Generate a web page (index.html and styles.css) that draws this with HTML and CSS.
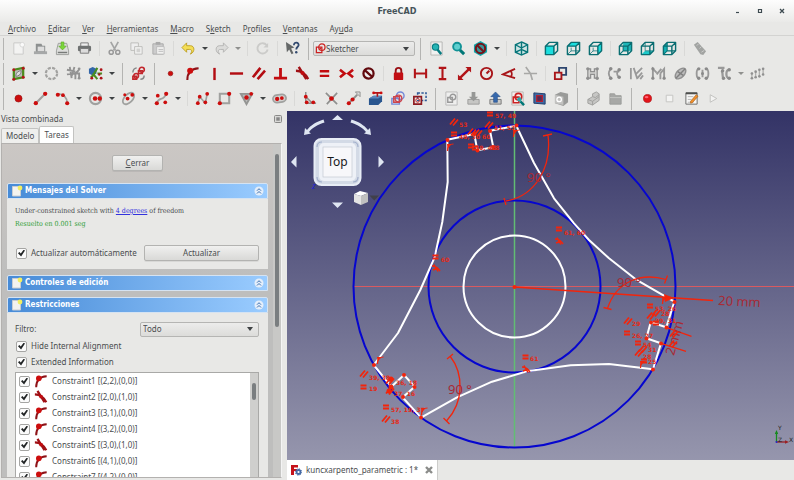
FILE: index.html
```html
<!DOCTYPE html>
<html lang="es">
<head>
<meta charset="utf-8">
<title>FreeCAD</title>
<link rel="stylesheet" href="styles.css">
</head>
<body>
<svg class="defs" aria-hidden="true">
<defs>
<symbol id="new" viewBox="0 0 16 16"><path d="M3 2h8l2 3v9H3z" fill="#f3f3f2" stroke="#c9c9c7"/><circle cx="12" cy="4" r="2.500" fill="#fafafa" stroke="#d8d8d6"/></symbol>
<symbol id="open" viewBox="0 0 16 16"><path d="M3 3h6l1 2h3v7H3z" fill="#8d9090"/><path d="M5 6h7v5H5z" fill="#ddd"/><path d="M1 11h14v3H1z" fill="#a6a8a8"/></symbol>
<symbol id="save" viewBox="0 0 16 16"><path d="M3.500 2.500h9l2 8v4h-13v-4z" fill="#dcdddb" stroke="#9b9d9a"/><path d="M3 11.500h10v1.500H3z" fill="#777a78"/><path d="M6.500 1h3v4.500H12L8 9.500 4 5.500h2.500z" fill="#7bd63a" stroke="#55a51f" stroke-width=".6"/></symbol>
<symbol id="print" viewBox="0 0 16 16"><path d="M4 2h8v4H4z" fill="#eee" stroke="#777"/><rect x="1" y="5" width="14" height="6" rx="1.500" fill="#6f7272"/><path d="M3.500 8h9v5h-9z" fill="#dcdcdc" stroke="#777"/></symbol>
<symbol id="cut" viewBox="0 0 16 16"><path d="M4 1l5 9M12 1L7 10" stroke="#a3a4a4" stroke-width="1.800" fill="none"/><circle cx="4.500" cy="12" r="2.200" fill="none" stroke="#999" stroke-width="1.600"/><circle cx="11.500" cy="12" r="2.200" fill="none" stroke="#999" stroke-width="1.600"/></symbol>
<symbol id="copy" viewBox="0 0 16 16"><path d="M2 2h8v8H2z" fill="#eee" stroke="#bcbcba"/><path d="M6 6h8v8H6z" fill="#f3f3f2" stroke="#bcbcba"/><path d="M8 8h4v4H8z" fill="#d2d2d0"/></symbol>
<symbol id="paste" viewBox="0 0 16 16"><path d="M2 3h11v11H2z" fill="#ccc" stroke="#aaa"/><path d="M5 1h5v3H5z" fill="#aaa"/><path d="M6 6h8v8H6z" fill="#f1f1f0" stroke="#bbb"/><path d="M8 9h5M8 11h5" stroke="#bbb"/></symbol>
<symbol id="undo" viewBox="0 0 16 16"><path d="M6 2v3h4c5 0 5 7 0 9 2-3 2-5-1-5H6v3L1 7z" fill="#f4de55" stroke="#b99a1d" stroke-width=".9"/></symbol>
<symbol id="redo" viewBox="0 0 16 16"><path d="M10 2v3H6c-5 0-5 7 0 9-2-3-2-5 1-5h3v3l5-5z" fill="#dcdcda" stroke="#b0b0ae" stroke-width=".9"/></symbol>
<symbol id="refresh" viewBox="0 0 16 16"><path d="M12.500 4.500A5.500 5.500 0 1 0 13.500 9" fill="none" stroke="#cbcbc9" stroke-width="2"/><path d="M14 2v5H9z" fill="#cbcbc9"/></symbol>
<symbol id="whats" viewBox="0 0 16 16"><path d="M1 1l9 6-3.500 1 2.500 5-2 1-2.500-5L2 12z" fill="#646767"/><path d="M9.500 4.500c0-4 5.500-3.500 5 0-.4 2-2.500 2-2.500 4.500" fill="none" stroke="#31496f" stroke-width="1.900"/><circle cx="12" cy="12" r="1.300" fill="#31496f"/></symbol>
<symbol id="sk" viewBox="0 0 16 16"><g fill="none" stroke="#c22" stroke-width="1.800"><circle cx="10" cy="6" r="4.600"/><path d="M2 6h8v8H2z"/><path d="M6 10l3-3"/></g></symbol>
<symbol id="zfit" viewBox="0 0 16 16"><path d="M2 1h12v14H2z" fill="#f1f1f0" stroke="#b5b5b2"/><path d="M9 9l4 5" stroke="#067b80" stroke-width="2.600"/><circle cx="7" cy="6.500" r="3.400" fill="#25b4b4" stroke="#0a7f84" stroke-width="1.200"/></symbol>
<symbol id="zsel" viewBox="0 0 16 16"><path d="M9 9l5 5" stroke="#077" stroke-width="3.200"/><circle cx="6.500" cy="6" r="4.200" fill="#5fcfcf" stroke="#119296" stroke-width="2"/></symbol>
<symbol id="dstyle" viewBox="0 0 16 16"><path d="M8 0l7 4v8l-7 4-7-4V4z" fill="#12a5a8"/><circle cx="8" cy="8" r="5" fill="#3a9699" stroke="#75141a" stroke-width="2.200"/><path d="M4.500 4.500l7 7" stroke="#75141a" stroke-width="2.200"/></symbol>
<symbol id="iso" viewBox="0 0 16 16"><path d="M8 1l6.500 3v8L8 15l-6.500-3V4z" fill="#cfe5e4"/><g fill="none" stroke="#08767a" stroke-width="1.500"><path d="M8 1l6.500 3v8L8 15l-6.500-3V4z"/><path d="M1.500 4L8 7.500 14.500 4M8 7.500V15M1.500 12L8 9l6.500 3M8 1v8"/></g></symbol>
<symbol id="cw" viewBox="0 0 16 16"><g fill="none" stroke="#0b6e72" stroke-width="1.500" stroke-linejoin="round"><path d="M1.500 5.500h9v9h-9zM1.500 5.500l4-4h9v9l-4 4M10.500 5.500l4-4"/></g></symbol>
<symbol id="front" viewBox="0 0 16 16"><path d="M2 5h9v9H2z" fill="#1bdede"/><use href="#cw"/></symbol>
<symbol id="topv" viewBox="0 0 16 16"><path d="M1.500 5.500l4-4h9l-4 4z" fill="#1bdede"/><path d="M2 14l3.500-3.500H14M5.500 11V7" stroke="#3a8b8e" fill="none"/><use href="#cw"/></symbol>
<symbol id="right" viewBox="0 0 16 16"><path d="M10.500 5.500l4-4v9l-4 4z" fill="#1bdede"/><path d="M2 14l3.500-3.500H11M5.500 11V7" stroke="#3a8b8e" fill="none"/><use href="#cw"/></symbol>
<symbol id="rear" viewBox="0 0 16 16"><path d="M5.500 1.500h9v9h-9z" fill="#1cb7b9"/><path d="M5.500 5v5.500H11M2 14l3.500-3.500" stroke="#08767a" stroke-width="1.200" fill="none"/><use href="#cw"/></symbol>
<symbol id="bottom" viewBox="0 0 16 16"><path d="M1.500 14.500l4-4h9l-4 4z" fill="#1bcaca"/><path d="M5.500 2v8.500H14" stroke="#3a8b8e" fill="none"/><use href="#cw"/></symbol>
<symbol id="left" viewBox="0 0 16 16"><path d="M1.500 5.500l4-4v9l-4 4z" fill="#12b2b4"/><path d="M5.500 2v8.500H14M2 14l3.500-3.500" stroke="#08767a" stroke-width="1.200" fill="none"/><use href="#cw"/></symbol>
<symbol id="measure" viewBox="0 0 16 16"><path d="M2 4l4-3 9 10-3 4-3-1z" fill="#a2a4a2"/><path d="M7 3L5 5M10 6L8 8M13 10l-3 2" stroke="#d0d0ce" stroke-width=".9"/></symbol>

<symbol id="map" viewBox="0 0 16 16"><path d="M3 4l10-2v10L3 14z" fill="#bcbcb8" stroke="#4d8c1d" stroke-width="2.400"/><path d="M5 11c0-4 3-6 6-6 0 4-3 6-6 6z" fill="#ddd" stroke="#777"/><g fill="#b3151b"><circle cx="3" cy="4" r="1.600"/><circle cx="13" cy="2.500" r="1.600"/><circle cx="13" cy="12" r="1.600"/><circle cx="3" cy="14" r="1.600"/></g></symbol>
<symbol id="dots" viewBox="0 0 16 16"><circle cx="8" cy="8" r="6" fill="none" stroke="#a2a2a0" stroke-width="2.400" stroke-dasharray="3.300 1.400"/></symbol>
<symbol id="hash" viewBox="0 0 16 16"><g stroke="#939393" stroke-width="2" fill="none"><path d="M1 4l9 2M1 9l9-1M4 1l2 12M9 1L6 11M9 9l5-5M10 14V8h4v5"/></g><g fill="#939393"><circle cx="14" cy="3" r="1.500"/><circle cx="14" cy="13" r="1.500"/></g></symbol>
<symbol id="hashc" viewBox="0 0 16 16"><path d="M1 3l4-2 4 2v5l-4 2-4-2z" fill="#3266a8"/><path d="M6 9l4-7M5 8l5 6M10 8h5M3 12l4-3" stroke="#4b8d20" stroke-width="2.200"/><g fill="#ad1318"><circle cx="14" cy="4" r="1.500"/><circle cx="14" cy="13" r="1.500"/><circle cx="4" cy="13" r="1.500"/><circle cx="12" cy="9" r="1.300"/></g></symbol>
<symbol id="link" viewBox="0 0 16 16"><g fill="none" stroke="#c2262c" stroke-width="1.700"><circle cx="11.500" cy="4" r="2.700"/><path d="M8 5h4v3H8zM2 11h4v3H2z"/><circle cx="5.500" cy="10.500" r="2.500"/></g><path d="M2 7c0-3 2-5 4-5M10 14c3 0 4-2 4-4" stroke="#888" fill="none" stroke-width="1.600"/></symbol>
<symbol id="pt" viewBox="0 0 16 16"><circle cx="8" cy="8" r="2.500" fill="#cc0d0d" stroke="#8d1010" stroke-width=".6"/></symbol>
<symbol id="coin" viewBox="0 0 16 16"><path d="M2.500 15c0-8 4-12 12-12.500" stroke="#8e1217" stroke-width="2.200" fill="none"/><circle cx="5.500" cy="5" r="3.200" fill="#cc0d0d"/></symbol>
<symbol id="vert" viewBox="0 0 16 16"><path d="M8 2v13" stroke="#b30c12" stroke-width="2.600"/></symbol>
<symbol id="horz" viewBox="0 0 16 16"><path d="M1 8h14" stroke="#b30c12" stroke-width="2.600"/></symbol>
<symbol id="par" viewBox="0 0 16 16"><path d="M2 12L10 2M7 14L15 5" stroke="#b30c12" stroke-width="2.800"/></symbol>
<symbol id="perp" viewBox="0 0 16 16"><path d="M8 2v11M1 13h14" stroke="#c20c10" stroke-width="3"/></symbol>
<symbol id="tan" viewBox="0 0 16 16"><path d="M1 5c6 0 10 3 13 9M4 1l8 13" stroke="#a01015" stroke-width="2.600" fill="none"/><circle cx="8" cy="7.500" r="2.200" fill="#c20c10"/></symbol>
<symbol id="eq" viewBox="0 0 16 16"><path d="M3 5.500h10M3 10.500h10" stroke="#c20c10" stroke-width="2.600"/></symbol>
<symbol id="sym" viewBox="0 0 16 16"><path d="M1 4l5 4-5 4M15 4l-5 4 5 4" stroke="#c20c10" stroke-width="2.800" fill="none"/></symbol>
<symbol id="block" viewBox="0 0 16 16"><circle cx="8" cy="8" r="5.400" fill="#eee" stroke="#61090d" stroke-width="2.400"/><path d="M4 4.500l8 7" stroke="#61090d" stroke-width="2.400"/></symbol>
<symbol id="lock" viewBox="0 0 16 16"><path d="M5 8V5a3 3 0 0 1 6 0v3" fill="none" stroke="#9a1015" stroke-width="2"/><rect x="3" y="7" width="10" height="8" rx="1" fill="#c20f14"/></symbol>
<symbol id="dh" viewBox="0 0 16 16"><path d="M2 3v10M14 3v10M2 8h12" stroke="#b11418" stroke-width="2.200"/></symbol>
<symbol id="dv" viewBox="0 0 16 16"><path d="M4 2h8M4 14h8M8 2v12" stroke="#b11418" stroke-width="2.200"/></symbol>
<symbol id="dd" viewBox="0 0 16 16"><path d="M3 13L13 3" stroke="#b11418" stroke-width="2.600"/><path d="M15 1v6L9 1zM1 15V9l6 6z" fill="#b11418"/></symbol>
<symbol id="rad" viewBox="0 0 16 16"><circle cx="8" cy="8" r="6" fill="none" stroke="#a81519" stroke-width="2"/><path d="M8 8l3-3" stroke="#a81519" stroke-width="2.200"/></symbol>
<symbol id="ang" viewBox="0 0 16 16"><path d="M15 3L2 9l13 4M10 5c2 2 2 5 0 7" stroke="#a81519" stroke-width="2" fill="none"/></symbol>
<symbol id="snell" viewBox="0 0 16 16"><path d="M1 8h14M3 1l5 7 2 7" stroke="#a8a8a6" stroke-width="1.800" fill="none"/></symbol>
<symbol id="tog" viewBox="0 0 16 16"><path d="M6.500 2H14v7.500H6.500z" fill="none" stroke="#2d466f" stroke-width="2"/><path d="M2 7h7v7H2z" fill="#e5e5e3" stroke="#a81519" stroke-width="2"/></symbol>
<symbol id="g1" viewBox="0 0 16 16"><path d="M3 3v10h3V9h4v4h3V3h-3v3H6V3z" fill="#d2d2d0" stroke="#8f8f8f" stroke-width="1.300"/><g fill="#8f8f8f"><circle cx="3" cy="3" r="1.800"/><circle cx="13" cy="3" r="1.800"/><circle cx="3" cy="13" r="1.800"/><circle cx="13" cy="13" r="1.800"/></g></symbol>
<symbol id="g2" viewBox="0 0 16 16"><path d="M4 3C1.500 6 1.500 10 4 13M7 6h6M13 4C10 6 10 10 13 12" stroke="#999" stroke-width="1.900" fill="none"/><g fill="#8a8a8a"><circle cx="4" cy="3" r="1.900"/><circle cx="4" cy="13" r="1.900"/><circle cx="13" cy="4" r="1.900"/><circle cx="13" cy="12" r="1.900"/></g></symbol>
<symbol id="g3" viewBox="0 0 16 16"><path d="M2 2v12M5 2l4 12M7 9l7-7M9 13l5-6M12 14l3-4" stroke="#999" stroke-width="1.900" fill="none"/></symbol>
<symbol id="g4" viewBox="0 0 16 16"><path d="M2 14V3l4 4M6 9l5-6M10 8l4-5v11M10 14V8" stroke="#999" stroke-width="2" fill="none"/><g fill="#8a8a8a"><circle cx="2" cy="13" r="1.700"/><circle cx="14" cy="13" r="1.700"/><circle cx="2" cy="3" r="1.700"/></g></symbol>
<symbol id="g5" viewBox="0 0 16 16"><ellipse cx="8" cy="8" rx="7" ry="4" transform="rotate(-45 8 8)" fill="#bbb" stroke="#8f8f8f" stroke-width="1.500"/><path d="M3 13L13 3M5 6l6 4" stroke="#808080" stroke-width="1.500"/></symbol>
<symbol id="g6" viewBox="0 0 16 16"><path d="M4 3C1 3 1 13 4 13M12 3c3 0 3 10 0 10M8 4v8" stroke="#999" stroke-width="2" fill="none"/><g fill="#8a8a8a"><circle cx="4" cy="3" r="1.800"/><circle cx="4" cy="13" r="1.800"/><circle cx="12" cy="3" r="1.800"/><circle cx="12" cy="13" r="1.800"/><circle cx="8" cy="8" r="1.600"/></g></symbol>
<symbol id="g7" viewBox="0 0 16 16"><path d="M1 2h7M5 5c2 4 0 7 2 9M13 4c-4 0-4 9 0 9" stroke="#999" stroke-width="2.400" fill="none"/><g fill="#8a8a8a"><circle cx="6" cy="5" r="1.800"/><circle cx="7" cy="13" r="1.800"/><circle cx="13" cy="4" r="1.900"/><circle cx="13" cy="13" r="1.900"/></g></symbol>
<symbol id="g8" viewBox="0 0 16 16"><path d="M2 7v6M6 6v6M10 4v7M14 3v6" stroke="#b0b0ae" stroke-width="1.400"/><g fill="#909090"><circle cx="2" cy="8" r="1.400"/><circle cx="6" cy="6" r="1.400"/><circle cx="10" cy="4" r="1.400"/><circle cx="14" cy="3" r="1.400"/><circle cx="2" cy="13" r="1.400"/><circle cx="6" cy="12" r="1.400"/><circle cx="10" cy="11" r="1.400"/><circle cx="14" cy="9" r="1.400"/></g></symbol>

<symbol id="bpt" viewBox="0 0 16 16"><circle cx="8" cy="8" r="3.800" fill="#cc0d0d" stroke="#8d1010" stroke-width=".6"/></symbol>
<symbol id="line" viewBox="0 0 16 16"><path d="M3 13L13 3" stroke="#a0a19f" stroke-width="2.200"/><g fill="#cc0d0d"><circle cx="3" cy="13" r="2.300"/><circle cx="13" cy="3" r="2.300"/></g></symbol>
<symbol id="arc" viewBox="0 0 16 16"><path d="M3 3c6 0 10 4 10 10" fill="none" stroke="#a0a19f" stroke-width="1.900"/><g fill="#cc0d0d"><circle cx="3" cy="4" r="2.200"/><circle cx="8.500" cy="4.500" r="2"/><circle cx="13" cy="13" r="2.200"/></g></symbol>
<symbol id="circ" viewBox="0 0 16 16"><circle cx="8" cy="8" r="6" fill="none" stroke="#a0a19f" stroke-width="2.200"/><g fill="#cc0d0d"><circle cx="7.500" cy="8" r="2.400"/><circle cx="12.500" cy="8" r="2.400"/></g></symbol>
<symbol id="ell" viewBox="0 0 16 16"><ellipse cx="8" cy="8" rx="7.500" ry="4.300" transform="rotate(-45 8 8)" fill="none" stroke="#a0a19f" stroke-width="1.900"/><g fill="#cc0d0d"><circle cx="7" cy="8" r="2"/><circle cx="12" cy="4" r="2"/><circle cx="4" cy="4" r="1.600"/></g></symbol>
<symbol id="bsp" viewBox="0 0 16 16"><path d="M3 13C5 5 10 12 13 3" fill="none" stroke="#a0a19f" stroke-width="2"/><g fill="#cc0d0d"><circle cx="3" cy="13" r="2.200"/><circle cx="4" cy="5" r="2"/><circle cx="13" cy="3" r="2.200"/><circle cx="12" cy="12" r="2"/></g></symbol>
<symbol id="poly" viewBox="0 0 16 16"><path d="M3 13l2-7 6 7 2-10" fill="none" stroke="#a0a19f" stroke-width="1.800"/><g fill="#cc0d0d"><circle cx="3" cy="13" r="2"/><circle cx="5" cy="6" r="2"/><circle cx="11" cy="12" r="2"/><circle cx="13" cy="3" r="2"/></g></symbol>
<symbol id="rect" viewBox="0 0 16 16"><path d="M3 3h10v10H3z" fill="none" stroke="#a0a19f" stroke-width="2.200"/><g fill="#cc0d0d"><circle cx="3" cy="13" r="2.200"/><circle cx="13" cy="3" r="2.200"/></g></symbol>
<symbol id="tri" viewBox="0 0 16 16"><path d="M2 3h12L8 14z" fill="#bbb" stroke="#949593" stroke-width="2"/><g fill="#cc0d0d"><circle cx="8" cy="7" r="2.400"/><circle cx="13" cy="3" r="2"/></g></symbol>
<symbol id="slot" viewBox="0 0 16 16"><rect x="1" y="4" width="14" height="8" rx="4" fill="#d2d2d0" stroke="#a0a19f" stroke-width="1.800" transform="rotate(-8 8 8)"/><g fill="#cc0d0d"><circle cx="5.500" cy="8.500" r="2.300"/><circle cx="10.500" cy="7.500" r="2"/></g></symbol>
<symbol id="fil" viewBox="0 0 16 16"><path d="M4 1v12h11M4 6l7 7" fill="none" stroke="#8f908e" stroke-width="1.600"/><g fill="#cc0d0d"><circle cx="4" cy="6" r="2"/><circle cx="5" cy="12" r="2"/><circle cx="12" cy="12" r="2"/></g></symbol>
<symbol id="trim" viewBox="0 0 16 16"><path d="M2 2l12 12M14 2L3 14" stroke="#8f908e" stroke-width="1.800"/><circle cx="8" cy="8" r="2.500" fill="#cc0d0d"/></symbol>
<symbol id="ext" viewBox="0 0 16 16"><path d="M3 13L12 4" stroke="#8f908e" stroke-width="2"/><path d="M10 1h5v5z" fill="#ddd" stroke="#8f908e"/><g fill="#cc0d0d"><circle cx="3" cy="13" r="2.200"/><circle cx="7" cy="9" r="2.200"/></g></symbol>
<symbol id="edge" viewBox="0 0 16 16"><path d="M1 8l5-3h9v6l-4 4H1z" fill="#29568f"/><path d="M1 8l5-3h9l-4 3z" fill="#5a86bd"/><path d="M6 2h8M10 2v4" stroke="#b11418" stroke-width="1.700"/><circle cx="6" cy="2" r="1.500" fill="#cc0d0d"/><circle cx="14" cy="2" r="1.500" fill="#cc0d0d"/></symbol>
<symbol id="carb" viewBox="0 0 16 16"><g fill="none" stroke-width="1.500"><g stroke="#7388d8"><circle cx="11" cy="5" r="4"/><path d="M2 8h8v6H2z"/></g><g stroke="#cc444c"><circle cx="9" cy="8" r="3.600"/><path d="M4 6h6v6H4z"/></g></g></symbol>
<symbol id="cons" viewBox="0 0 16 16"><path d="M6 2h9v8H6z" fill="none" stroke="#2e5a98" stroke-width="1.600" stroke-dasharray="2.500 1.500"/><path d="M2 6h8v8H2z" fill="none" stroke="#8d1a20" stroke-width="1.800"/><circle cx="6" cy="10" r="2" fill="none" stroke="#c22"/></symbol>
<symbol id="sg" viewBox="0 0 16 16"><path d="M2 1h12v14H2z" fill="#efefee" stroke="#b9b9b7"/><circle cx="9.500" cy="6.500" r="3" fill="none" stroke="#999" stroke-width="1.500"/><path d="M4 7h5v5H4z" fill="none" stroke="#999" stroke-width="1.500"/></symbol>
<symbol id="imp" viewBox="0 0 16 16"><path d="M2 9h12v5H2z" fill="#c6c6c4" stroke="#9c9c9a"/><path d="M6 1h4v5h3l-5 5-5-5h3z" fill="#969795"/></symbol>
<symbol id="exp" viewBox="0 0 16 16"><path d="M2 9h12v5H2z" fill="#c9c9c7" stroke="#777"/><path d="M6 12h4V6h3L8 1 3 6h3z" fill="#3769ac" stroke="#234a80" stroke-width=".6"/></symbol>
<symbol id="vsk" viewBox="0 0 16 16"><path d="M2 1h12v14H2z" fill="#f5eeee" stroke="#b5b5b2"/><circle cx="9" cy="6" r="3.500" fill="none" stroke="#c22" stroke-width="1.700"/><path d="M3.500 6.500h6v6h-6z" fill="none" stroke="#c22" stroke-width="1.700"/><path d="M11 11l4 4" stroke="#077" stroke-width="2.600"/><circle cx="10" cy="9" r="2.300" fill="#26a9aa"/></symbol>
<symbol id="vsec" viewBox="0 0 16 16"><path d="M2 2l12 1v11L2 13z" fill="#3f69a4" stroke="#203d6b"/><path d="M5 5h6v6H5z" fill="#542a55" stroke="#b22233" stroke-width="1.400"/></symbol>
<symbol id="vbox" viewBox="0 0 16 16"><path d="M1 4l6-3 8 2v9l-5 4-9-3z" fill="#9a9b99"/><path d="M1 4l9 2v9l-9-2z" fill="#c2c2c0"/><circle cx="5.500" cy="9" r="2.400" fill="none" stroke="#fff" stroke-width="1.400"/></symbol>
<symbol id="body" viewBox="0 0 16 16"><path d="M2 9l5-3V3l4-2 3 2v7l-7 5-5-2z" fill="#c6c6c4" stroke="#9f9f9d"/><path d="M2 9l5 2 7-5M7 6l3 1 4-3M7 11v4" stroke="#9f9f9d" fill="none"/></symbol>
<symbol id="grp" viewBox="0 0 16 16"><path d="M2 3h5l1 2h6v9H2z" fill="#a7a8a6" stroke="#9c9d9b"/><path d="M2 7h12" stroke="#c5c5c3"/></symbol>
<symbol id="rec" viewBox="0 0 16 16"><circle cx="8" cy="8" r="4.300" fill="#e3141a" stroke="#a91216" stroke-width=".7"/><ellipse cx="7" cy="6.500" rx="2" ry="1.300" fill="#f67"/></symbol>
<symbol id="stop" viewBox="0 0 16 16"><path d="M4.500 4.500h7v7h-7z" fill="#f4f4f3" stroke="#c4c4c2"/></symbol>
<symbol id="edit" viewBox="0 0 16 16"><path d="M2 2h12v12H2z" fill="#f7f7f6" stroke="#6a6b69"/><path d="M2 2.500h12" stroke="#4d4e4c" stroke-width="2"/><path d="M4 6h6M4 9h4M4 12h6" stroke="#b5b5b3"/><path d="M7 11l6-7 2 1.500-6 7-2 .5z" fill="#f0902c" stroke="#a25a13" stroke-width=".6"/></symbol>
<symbol id="play" viewBox="0 0 16 16"><path d="M4.500 4l7 4-7 4z" fill="#f3f3f2" stroke="#c0c0be"/></symbol>

<symbol id="task" viewBox="0 0 12 12"><path d="M1.500 1.500h8v9.500h-8z" fill="#f3f3ef" stroke="#c9cdd2"/><circle cx="9" cy="3" r="2.400" fill="#f2ee62"/></symbol>
<symbol id="chev" viewBox="0 0 12 12"><circle cx="6" cy="6" r="4.500" fill="#e4eefa"/><path d="M4 5.700l2-2 2 2M4 8.500l2-2 2 2" fill="none" stroke="#3c6fae" stroke-width="1"/></symbol>
<symbol id="fc" viewBox="0 0 12 12"><path d="M1 1h7v2.500H4V5h3v2H4v4H1z" fill="#c5121a"/><circle cx="8.500" cy="8" r="2" fill="none" stroke="#4569a5" stroke-width="1.800"/><circle cx="8.500" cy="8" r="3.200" fill="none" stroke="#4569a5" stroke-width="1" stroke-dasharray="1.200 1.300"/></symbol>
<symbol id="float" viewBox="0 0 8 8"><rect x=".5" y=".5" width="7" height="7" rx="1" fill="#d8d8d6" stroke="#8a8a88"/><path d="M2.500 2.500l3 3M5.500 2.500l-3 3" stroke="#777" fill="none" stroke-width=".8"/><circle cx="4" cy="4" r="1.500" fill="none" stroke="#777" stroke-width=".7"/></symbol>
<g id="mEq"><path d="M-3-1.500h6M-3 1.500h6" stroke="#f2250c" stroke-width="1.800"/></g>
<g id="mPar"><path d="M-4 2.500L1-3.500M-1 3.500L4-2.500" stroke="#f2250c" stroke-width="1.800"/></g>
<g id="mTan"><path d="M-4-2C0-2 2 0 4 3M-2-3.500l4 7M-3 2l5-2" stroke="#f2250c" stroke-width="1.500" fill="none"/></g>
<g id="mCo"><path d="M-2.500 4c0-5 2-7 6-7" stroke="#f2250c" stroke-width="1.200" fill="none"/><path d="M-3-3h4.500l-4 5z" fill="#f2250c"/></g>
</defs>
</svg>

<header class="titlebar"><h1>FreeCAD</h1>
<div class="winbtns"><button aria-label="Minimizar"><svg viewBox="0 0 6 6"><path d="M1 4.500h3" stroke="#3d4a50" stroke-width="1.200"/></svg></button><button aria-label="Maximizar"><svg viewBox="0 0 6 6"><path d="M1.500 1.500h3v3h-3z" fill="none" stroke="#3d4a50" stroke-width="1.200"/></svg></button><button aria-label="Cerrar ventana"><svg viewBox="0 0 6 6"><path d="M1 1l4 4M5 1L1 5" stroke="#3d4a50" stroke-width="1.300"/></svg></button></div>
</header>
<nav class="menubar"><a href="#"><u>A</u>rchivo</a><a href="#"><u>E</u>ditar</a><a href="#"><u>V</u>er</a><a href="#"><u>H</u>erramientas</a><a href="#"><u>M</u>acro</a><a href="#">S<u>k</u>etch</a><a href="#">P<u>r</u>ofiles</a><a href="#"><u>V</u>entanas</a><a href="#">Ay<u>u</u>da</a></nav>

<div class="toolbar"><i class="handle"></i>
<button aria-label="Nuevo"><svg><use href="#new"/></svg></button><button aria-label="Abrir"><svg><use href="#open"/></svg></button><button aria-label="Guardar"><svg><use href="#save"/></svg></button><button aria-label="Imprimir"><svg><use href="#print"/></svg></button><i class="sep"></i>
<button aria-label="Cortar"><svg><use href="#cut"/></svg></button><button aria-label="Copiar"><svg><use href="#copy"/></svg></button><button aria-label="Pegar"><svg><use href="#paste"/></svg></button><i class="sep"></i>
<button aria-label="Deshacer"><svg><use href="#undo"/></svg></button><button class="drop" aria-label="Lista deshacer"></button><button aria-label="Rehacer"><svg><use href="#redo"/></svg></button><button class="drop dim" aria-label="Lista rehacer"></button><i class="sep"></i>
<button aria-label="Actualizar vista"><svg><use href="#refresh"/></svg></button><i class="sep"></i><button aria-label="Ayuda contextual"><svg><use href="#whats"/></svg></button><i class="handle"></i>
<div class="combo workbench"><svg class="wbicon"><use href="#sk"/></svg><select aria-label="Entorno"><option>Sketcher</option></select></div><i class="handle"></i>
<button aria-label="Ajustar todo"><svg><use href="#zfit"/></svg></button><button aria-label="Ajustar selección"><svg><use href="#zsel"/></svg></button><button aria-label="Estilo de dibujo"><svg><use href="#dstyle"/></svg></button><button class="drop" aria-label="Estilos"></button><i class="sep"></i>
<button aria-label="Isométrica"><svg><use href="#iso"/></svg></button><i class="sep"></i>
<button aria-label="Frontal"><svg><use href="#front"/></svg></button><button aria-label="Superior"><svg><use href="#topv"/></svg></button><button aria-label="Derecha"><svg><use href="#right"/></svg></button><i class="sep"></i>
<button aria-label="Trasera"><svg><use href="#rear"/></svg></button><button aria-label="Inferior"><svg><use href="#bottom"/></svg></button><button aria-label="Izquierda"><svg><use href="#left"/></svg></button><i class="sep"></i>
<button aria-label="Medir"><svg><use href="#measure"/></svg></button></div>

<div class="toolbar"><i class="handle"></i>
<button aria-label="Espacio virtual"><svg><use href="#map"/></svg></button><button class="drop" aria-label="Más"></button><button aria-label="Cerrar forma"><svg><use href="#dots"/></svg></button><button aria-label="Conectar"><svg><use href="#hash"/></svg></button><button aria-label="Seleccionar"><svg><use href="#hashc"/></svg></button><button class="drop" aria-label="Más"></button><i class="handle"></i>
<button aria-label="Cambiar espacio"><svg><use href="#link"/></svg></button><i class="handle"></i>
<button aria-label="Coincidente"><svg><use href="#pt"/></svg></button><button aria-label="Punto en objeto"><svg><use href="#coin"/></svg></button><button aria-label="Vertical"><svg><use href="#vert"/></svg></button><button aria-label="Horizontal"><svg><use href="#horz"/></svg></button><button aria-label="Paralela"><svg><use href="#par"/></svg></button><button aria-label="Perpendicular"><svg><use href="#perp"/></svg></button><button aria-label="Tangente"><svg><use href="#tan"/></svg></button><button aria-label="Igual"><svg><use href="#eq"/></svg></button><button aria-label="Simetría"><svg><use href="#sym"/></svg></button><button aria-label="Bloqueo"><svg><use href="#block"/></svg></button><i class="sep"></i>
<button aria-label="Fijar"><svg><use href="#lock"/></svg></button><button aria-label="Distancia horizontal"><svg><use href="#dh"/></svg></button><button aria-label="Distancia vertical"><svg><use href="#dv"/></svg></button><button aria-label="Distancia"><svg><use href="#dd"/></svg></button><button aria-label="Radio"><svg><use href="#rad"/></svg></button><button aria-label="Ángulo"><svg><use href="#ang"/></svg></button><button aria-label="Refracción"><svg><use href="#snell"/></svg></button><i class="sep"></i>
<button aria-label="Conmutar"><svg><use href="#tog"/></svg></button><i class="handle"></i>
<button aria-label="Línea cerrada"><svg><use href="#g1"/></svg></button><button aria-label="Conectar aristas"><svg><use href="#g2"/></svg></button><button aria-label="Restricciones"><svg><use href="#g3"/></svg></button><button aria-label="Elementos"><svg><use href="#g4"/></svg></button><button aria-label="Geometría interna"><svg><use href="#g5"/></svg></button><button aria-label="Simetría de copia"><svg><use href="#g6"/></svg></button><button aria-label="Clonar"><svg><use href="#g7"/></svg></button><button class="drop dim" aria-label="Más"></button><button aria-label="Matriz"><svg><use href="#g8"/></svg></button></div>

<div class="toolbar"><i class="handle"></i>
<button aria-label="Punto"><svg><use href="#bpt"/></svg></button><button aria-label="Línea"><svg><use href="#line"/></svg></button><button aria-label="Arco"><svg><use href="#arc"/></svg></button><button class="drop" aria-label="Arcos"></button><button aria-label="Círculo"><svg><use href="#circ"/></svg></button><button class="drop" aria-label="Círculos"></button><button aria-label="Elipse"><svg><use href="#ell"/></svg></button><button class="drop" aria-label="Cónicas"></button><button aria-label="B-spline"><svg><use href="#bsp"/></svg></button><button class="drop" aria-label="Curvas"></button><i class="sep"></i>
<button aria-label="Polilínea"><svg><use href="#poly"/></svg></button><button aria-label="Rectángulo"><svg><use href="#rect"/></svg></button><button aria-label="Polígono"><svg><use href="#tri"/></svg></button><button class="drop" aria-label="Polígonos"></button><button aria-label="Ranura"><svg><use href="#slot"/></svg></button><i class="sep"></i>
<button aria-label="Redondeo"><svg><use href="#fil"/></svg></button><button aria-label="Recortar"><svg><use href="#trim"/></svg></button><button aria-label="Extender"><svg><use href="#ext"/></svg></button><button aria-label="Geometría externa"><svg><use href="#edge"/></svg></button><button aria-label="Copia de carbón"><svg><use href="#carb"/></svg></button><button aria-label="Construcción"><svg><use href="#cons"/></svg></button><i class="handle"></i>
<button aria-label="Nuevo croquis"><svg><use href="#sg"/></svg></button><button aria-label="Editar croquis"><svg><use href="#imp"/></svg></button><button aria-label="Salir del croquis"><svg><use href="#exp"/></svg></button><button aria-label="Ver croquis"><svg><use href="#vsk"/></svg></button><button aria-label="Ver sección"><svg><use href="#vsec"/></svg></button><button aria-label="Trazar croquis"><svg><use href="#vbox"/></svg></button><i class="handle"></i>
<button aria-label="Pieza"><svg><use href="#body"/></svg></button><button aria-label="Grupo"><svg><use href="#grp"/></svg></button><i class="handle"></i>
<button aria-label="Grabar macro"><svg><use href="#rec"/></svg></button><button aria-label="Detener macro"><svg><use href="#stop"/></svg></button><button aria-label="Macros"><svg><use href="#edit"/></svg></button><button aria-label="Ejecutar macro"><svg><use href="#play"/></svg></button></div>

<main class="main">
<aside class="side">
<div class="dockhead"><span>Vista combinada</span><button aria-label="Desacoplar"><svg><use href="#float"/></svg></button></div>
<div class="tabs" role="tablist"><button role="tab" class="tab">Modelo</button><button role="tab" class="tab on" aria-selected="true">Tareas</button></div>
<div class="scroll">
<div class="tasks">
<button class="btn close"><u>C</u>errar</button>
<section class="group"><h2><svg><use href="#task"/></svg>Mensajes del Solver<svg class="chev"><use href="#chev"/></svg></h2>
<div class="body solver">
<p class="msg">Under-constrained sketch with <a href="#">4 degrees</a> of freedom</p>
<p class="msg ok">Resuelto en 0.001 seg</p>
<div class="update"><label class="check"><input type="checkbox" checked>Actualizar automáticamente</label><button class="btn">Actualizar</button></div>
</div></section>
<section class="group"><h2><svg><use href="#task"/></svg>Controles de edición<svg class="chev"><use href="#chev"/></svg></h2></section>
<section class="group grow"><h2><svg><use href="#task"/></svg>Restricciones<svg class="chev"><use href="#chev"/></svg></h2>
<div class="body limits">
<div class="filter"><label for="filtro">Filtro:</label><div class="combo"><select id="filtro"><option>Todo</option></select></div></div>
<label class="check"><input type="checkbox" checked>Hide Internal Alignment</label>
<label class="check"><input type="checkbox" checked>Extended Information</label>
<div class="listbox"><ul>
<li><label class="check"><input type="checkbox" checked><svg><use href="#coin"/></svg>Constraint1 [(2,2),(0,0)]</label></li>
<li><label class="check"><input type="checkbox" checked><svg><use href="#tan"/></svg>Constraint2 [(2,0),(1,0)]</label></li>
<li><label class="check"><input type="checkbox" checked><svg><use href="#coin"/></svg>Constraint3 [(3,1),(0,0)]</label></li>
<li><label class="check"><input type="checkbox" checked><svg><use href="#coin"/></svg>Constraint4 [(3,2),(0,0)]</label></li>
<li><label class="check"><input type="checkbox" checked><svg><use href="#tan"/></svg>Constraint5 [(3,0),(1,0)]</label></li>
<li><label class="check"><input type="checkbox" checked><svg><use href="#coin"/></svg>Constraint6 [(4,1),(0,0)]</label></li>
<li><label class="check"><input type="checkbox" checked><svg><use href="#coin"/></svg>Constraint7 [(4,2),(0,0)]</label></li>
</ul><div class="bar"><i></i></div></div>
</div></section>
</div>
<div class="bar outer"><i></i></div>
</div>
</aside>

<section class="view">
<svg class="canvas" viewBox="287 111 507 349" preserveAspectRatio="xMidYMid slice" role="img" aria-label="Croquis">
<path d="M514.500 111v336" stroke="#62bd73" stroke-width="1.500"/>
<path d="M353 286.500h1000" stroke="#d95a60" stroke-width="1.200"/>
<g fill="none" stroke="#0606cf" stroke-width="2"><circle cx="514.500" cy="286.500" r="161"/><circle cx="514.500" cy="286.500" r="86"/></g>
<g fill="none" stroke="#fff" stroke-width="2" stroke-linejoin="round"><circle cx="514.500" cy="286.500" r="51"/>
<path d="M447.300 139.700L447.700 182 442.300 222 434.700 257 420.300 290 398 333 373.700 365 391.300 386.700 404 375 414.700 386.700 402.700 397.300 421 417.700 457 397.300 492 381.700 527 371.300 570.700 365.300 609 364 653 369.300 661 343.300 646.300 338.300 650.700 322.300 666.300 327.300 674.300 301.700 635.700 279.300 609 258.300 589 240 574 223.300 554 198.300 534 163 516.300 125.700 490 130.700 493.300 147.300 477.300 150.300 474.300 134z"/></g>
<g fill="none" stroke="#f2250c" stroke-width="1.300">
<path d="M548 135C552 168 535 196 506 201M543 136l9-2M504 198l2 7"/>
<path d="M666 279.500C640 272 616 282 607.500 308.500M667.500 275.500l-3 8M603.500 307.500l8 2"/>
<path d="M450 356C464 374 464 402 446.500 421M447 359l6-5M443.500 418l6 6"/>
<path d="M514.500 287L713 300.500M666 327.300l25.500 9M661 343.300l25 8"/></g>
<g class="dims"><text x="527" y="182">90 °</text><text x="617" y="287">90 °</text><text x="448" y="394">90 °</text><text x="718" y="305" transform="rotate(3 718 305)">20 mm</text><text x="674" y="356" transform="rotate(-74 674 356)">2 mm</text></g>
<path d="M664 294l10 4-9 4z" fill="#f2250c"/>
<g fill="#f2250c"><circle cx="514.500" cy="287" r="2"/><circle cx="447.500" cy="140" r="2"/><circle cx="474.500" cy="134" r="2"/><circle cx="477.500" cy="150.500" r="2"/><circle cx="493" cy="147" r="2"/><circle cx="490" cy="131" r="2"/><circle cx="516.500" cy="125.500" r="2"/><circle cx="374" cy="365" r="2"/><circle cx="391" cy="387" r="2.500"/><circle cx="404" cy="375" r="2"/><circle cx="414.500" cy="387" r="2"/><circle cx="403" cy="397" r="2"/><circle cx="421" cy="417.500" r="2"/><circle cx="674.500" cy="302" r="2"/><circle cx="666.500" cy="327.500" r="2"/><circle cx="651" cy="322.500" r="2"/><circle cx="646.500" cy="338.500" r="2"/><circle cx="661" cy="343.500" r="2"/><circle cx="653" cy="369.500" r="2"/><circle cx="391" cy="379" r="2.500"/><circle cx="389" cy="391" r="2.500"/></g>
<g><use href="#mPar" x="454" y="122"/><use href="#mEq" x="490" y="114"/><use href="#mPar" x="489" y="125"/><use href="#mEq" x="454" y="134"/><use href="#mPar" x="472" y="132"/><use href="#mPar" x="478" y="133"/><use href="#mEq" x="471" y="146"/><use href="#mEq" x="475" y="148"/><use href="#mCo" x="450" y="147"/><use href="#mCo" x="516" y="133"/>
<use href="#mEq" x="435.500" y="257"/><use href="#mTan" x="436" y="268"/><use href="#mEq" x="559" y="229"/><use href="#mTan" x="559" y="241"/><use href="#mEq" x="525.500" y="357"/><use href="#mTan" x="526" y="369"/>
<use href="#mPar" x="364" y="374"/><use href="#mEq" x="363.500" y="387"/><use href="#mEq" x="386" y="407"/><use href="#mPar" x="386" y="419"/><use href="#mCo" x="380" y="360"/><use href="#mCo" x="424" y="411"/><use href="#mPar" x="390" y="381"/><use href="#mPar" x="390" y="391"/>
<use href="#mPar" x="628" y="321"/><use href="#mEq" x="627" y="333"/><use href="#mEq" x="650" y="306"/><use href="#mPar" x="651" y="316"/><use href="#mPar" x="656" y="313"/><use href="#mEq" x="656" y="323"/><use href="#mEq" x="638" y="343"/><use href="#mPar" x="639" y="353"/><use href="#mPar" x="643" y="349"/><use href="#mEq" x="644" y="361"/><use href="#mCo" x="643" y="364"/><use href="#mCo" x="665" y="300"/><use href="#mPar" x="674" y="334"/><use href="#mPar" x="673" y="344"/></g>
<g class="num"><text x="459" y="127">53</text><text x="495" y="118">57, 49</text><text x="494" y="130">51, 53</text><text x="459" y="139">49, 50</text><text x="482" y="139">60</text><text x="475" y="150">39, 48</text><text x="491" y="150">18</text><text x="441" y="262">60</text><text x="564" y="235">61, 60</text><text x="530" y="361">61</text>
<text x="369" y="380">39, 38</text><text x="369" y="391">19</text><text x="391" y="412">57, 19, 37</text><text x="391" y="424">38</text><text x="396" y="385">36, 18</text><text x="394" y="396">37, 16</text>
<text x="632" y="326">29</text><text x="632" y="338">26, 27</text><text x="655" y="311">53, 26</text><text x="661" y="316">28</text><text x="655" y="323">29, 31</text><text x="643" y="347">54</text><text x="648" y="352">31</text><text x="643" y="359">28</text><text x="648" y="364">25</text></g>

<g fill="#dfe6f2"><path d="M332 120h11l-5.500-5zM332 202.500h11l-5.500 5.500zM296.500 156l-5.500 6 5.500 5.500zM378.500 156l5.500 6-5.500 5.500z"/><path d="M304 135l1-7 2 2c4-5 9-8 16.500-10.500l1 3C318 124.500 312 128 309 132l2 1.500zM371 135l-1-7-2 2c-4-5-9-8-16.500-10.500l-1 3C357 124.500 363 128 366 132l-2 1.500z"/></g>
<rect x="314.500" y="139" width="46" height="46" rx="7" fill="#d3dae6" stroke="#e8edf6" stroke-width="2"/>
<rect x="319" y="143" width="37" height="38" rx="5" fill="#eef1f7"/><rect x="323" y="147" width="29" height="30" fill="#f7f7fa" stroke="#c3c8d2" stroke-width=".7"/>
<path d="M317 147q0-5 5-5M358 147q0-5-5-5M317 177q0 5 5 5M358 177q0 5-5 5" fill="none" stroke="#a3b0cc" stroke-width="1.200"/>
<text class="cube" x="337.500" y="166">Top</text><text class="zax" x="312" y="189">z</text>
<path d="M354 194l6-3 8 2-7 3z" fill="#fff"/><path d="M354 194l7 2v9l-7-3z" fill="#e3e3e3"/><path d="M361 196l7-3v9l-7 3z" fill="#c0c0c0"/><path d="M369.500 195.500h9.500l-4.700 5z" fill="#40404a"/>
<path d="M776.500 442v-10" stroke="#168a1f" stroke-width="1.300"/><path d="M774.800 434l1.700-4 1.700 4z" fill="#168a1f"/><path d="M777 442h9" stroke="#9a2024" stroke-width="1.300"/><path d="M785 440.300l4 1.700-4 1.700z" fill="#9a2024"/><circle cx="776.500" cy="442" r="1" fill="#22c"/>
<g class="ax"><text x="778" y="430">Y</text><text x="778" y="442">Z</text><text x="789" y="442">X</text></g>
</svg>
<div class="doctabs"><div class="doctab"><svg><use href="#fc"/></svg><span>kuncxarpento_parametric : 1*</span><button aria-label="Cerrar documento"><svg viewBox="0 0 8 8"><path d="M1 1l6 6M7 1L1 7" stroke="#8b8c8a" stroke-width="2.400"/></svg></button></div></div>
</section>
</main>
</body>
</html>
```
FILE: styles.css
```css
* { box-sizing: border-box; }
body {
  margin: 0;
  height: 100vh;
  display: flex;
  flex-direction: column;
  overflow: hidden;
  background: #e8e8e6;
  color: #4a4d4f;
  font: 8px/12px "Noto Sans", "Open Sans", sans-serif;
}
h1, h2, p, ul { margin: 0; padding: 0; }
button { border: 0; padding: 0; background: none; font: inherit; color: inherit; }
.defs { position: absolute; width: 0; height: 0; }

.titlebar {
  flex: none;
  height: 22px;
  display: grid;
  grid-template-columns: 1fr auto 1fr;
  align-items: center;
  background: linear-gradient(#fdfdfd, #eaeae8);
}
.titlebar h1 { grid-column: 2; font: bold 9px/12px "DejaVu Sans Condensed", "Noto Sans", sans-serif; color: #465459; }
.winbtns { display: flex; justify-content: flex-end; gap: 14px; padding-right: 8px; }
.winbtns button { width: 8px; height: 8px; display: flex; justify-content: center; align-items: center; }
.winbtns svg { width: 6px; height: 6px; }

.menubar {
  flex: none;
  height: 14px;
  padding-left: 8px;
  display: flex;
  align-items: center;
  gap: 12px;
  border-bottom: 1px solid #d3d3d1;
}
.menubar a { color: inherit; text-decoration: none; }

.toolbar { flex: none; height: 25px; display: flex; align-items: center; }
.toolbar button { flex: none; width: 22px; height: 22px; display: flex; align-items: center; justify-content: center; }
.toolbar button svg { width: 15px; height: 15px; }
.toolbar .drop { width: 11px; }
.drop::before {
  content: "";
  border: 3px solid transparent;
  border-top-color: #3f4244;
  border-bottom: 0;
}
.drop.dim::before { border-top-color: #8f908e; }
.handle, .sep { flex: none; width: 10px; height: 22px; display: flex; justify-content: center; }
.sep { width: 8px; height: 15px; }
.handle:first-child { width: 7px; }
.handle::before { content: ""; width: 1px; background: #b4b4b2; }
.sep::before { content: ""; width: 1px; background: #d9d9d7; }

.combo {
  position: relative;
  display: flex;
  align-items: center;
  height: 15px;
  border: 1px solid #b5b5b3;
  border-radius: 2px;
  background: linear-gradient(#ececeb, #dcdcda);
}
.combo::after {
  content: "";
  position: absolute;
  right: 5px;
  border: 3px solid transparent;
  border-top: 4px solid #3f4244;
  border-bottom: 0;
  pointer-events: none;
}
.combo select {
  appearance: none;
  flex: 1;
  min-width: 0;
  border: 0;
  padding: 0 2px;
  background: none;
  font: inherit;
  color: inherit;
}
.workbench { flex: none; width: 102px; }
.wbicon { width: 11px; height: 11px; margin-left: 1px; }
.workbench select { padding-left: 0; }

.main { flex: 1; min-height: 0; display: flex; }
.side { flex: none; width: 287px; padding: 0 5px 2px 1px; display: flex; flex-direction: column; }
.dockhead { flex: none; height: 15px; display: flex; align-items: center; justify-content: space-between; }
.dockhead button { width: 8px; height: 8px; display: flex; }
.dockhead svg { width: 8px; height: 8px; }
.tabs { flex: none; height: 17px; display: flex; align-items: flex-end; }
.tab { height: 15px; padding: 0 4px; border: 1px solid #c3c3c1; border-bottom: 0; background: #efefed; border-radius: 2px 2px 0 0; }
.tab.on { height: 17px; background: #fff; }
.scroll {
  flex: 1;
  min-height: 0;
  display: flex;
  border: 1px solid #b3b1af;
  border-right-color: #f4f4f4;
  background: linear-gradient(#cbc7c4, #bebebd 40%);
}
.tasks { flex: 1; min-width: 0; padding: 11px 5px 0; display: flex; flex-direction: column; }
.btn {
  height: 16px;
  border: 1px solid #b3b3b1;
  border-radius: 2px;
  background: linear-gradient(#f0f0ef, #d9d9d7);
  box-shadow: 0 1px 0 #0001;
}
.close { align-self: center; flex: none; width: 51px; margin-bottom: 12px; }
.group { flex: none; margin-bottom: 6px; }
.group.grow { flex: 1; min-height: 0; margin-bottom: 0; display: flex; flex-direction: column; }
.group h2 {
  flex: none;
  height: 16px;
  display: flex;
  align-items: center;
  gap: 2px;
  padding: 0 2px 0 3px;
  border: 1px solid #d5e3f2;
  border-radius: 2px 2px 0 0;
  background: linear-gradient(90deg, #478bd7, #9accff);
  color: #fff;
  font: bold 8px/12px "DejaVu Sans Condensed", "Noto Sans", sans-serif;
}
.group h2 svg { width: 12px; height: 12px; }
.group h2 .chev { margin-left: auto; }
.body { background: #e8e8e6; padding: 0 9px 0 8px; }
.solver { height: 70px; padding-top: 6px; }
.msg { font: 7px/13px "DejaVu Serif Condensed", "Liberation Serif", serif; }
.msg a { color: #3333dd; }
.msg.ok { color: #2f9e37; }
.update { display: flex; align-items: center; justify-content: space-between; margin-top: 14px; }
.update .btn { width: 115px; }
.check { display: flex; align-items: center; gap: 4px; padding-left: 1px; height: 16px; white-space: nowrap; }
.check input {
  appearance: none;
  flex: none;
  width: 11px;
  height: 11px;
  margin: 0;
  border: 1px solid #a5a5a3;
  border-radius: 2px;
  background: #fbfbfb;
  display: flex;
  align-items: center;
  justify-content: center;
}
.check input:checked::before {
  content: "";
  width: 7px;
  height: 7px;
  background: #222526;
  clip-path: polygon(0 52%, 20% 34%, 40% 58%, 80% 2%, 100% 16%, 44% 100%);
}
.limits { flex: 1; min-height: 0; padding-top: 8px; display: flex; flex-direction: column; }
.filter { flex: none; display: flex; align-items: center; justify-content: space-between; height: 16px; margin-bottom: 1px; }
.filter .combo { width: 119px; }
.limits > .check { flex: none; }
.listbox { flex: 1; min-height: 0; margin-top: 2px; display: flex; border: 1px solid #a9a9a7; border-bottom: 0; background: #fff; overflow: hidden; }
.listbox ul { flex: 1; list-style: none; padding-left: 2px; overflow: hidden; }
.listbox li svg { width: 14px; height: 14px; }
.bar { flex: none; width: 8px; padding: 10px 2px 0; background: #cfcfcd; }
.bar i { display: block; height: 17px; border-radius: 2px; background: #7a7e80; }
.bar.outer { background: #c8c8c6; }
.bar.outer i { height: 173px; }

.view { flex: 1; min-width: 0; display: flex; flex-direction: column; }
.canvas {
  flex: 1;
  min-height: 0;
  width: 100%;
  display: block;
  background: linear-gradient(#333366, #9696ad);
}
.dims { font: 13px "Noto Sans", sans-serif; fill: #a82a35; }
.num { font: bold 6px "DejaVu Sans", sans-serif; fill: #e32a16; }
.cube { font: 12px "Noto Sans", sans-serif; fill: #17181a; text-anchor: middle; }
.zax { font: italic 8px "Noto Sans", sans-serif; fill: #2020d8; }
.ax { font: 6px "DejaVu Sans", sans-serif; fill: #222; }
.doctabs { flex: none; height: 20px; display: flex; }
.doctab { display: flex; align-items: center; gap: 4px; padding: 0 3px; background: #fff; border-right: 1px solid #cdcdcb; }
.doctab > svg { width: 12px; height: 12px; }
.doctab button { width: 10px; height: 10px; margin-left: 2px; display: flex; align-items: center; justify-content: center; }
.doctab button svg { width: 8px; height: 8px; }
```
